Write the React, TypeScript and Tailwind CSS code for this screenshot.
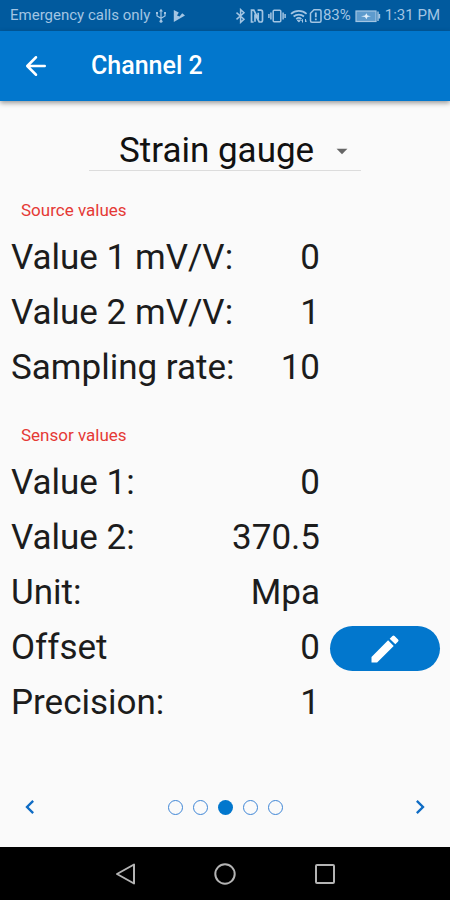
import React, { useState } from 'react';

type Reading = {
  label: string;
  value: string;
  editable?: boolean;
};

const SENSOR_TYPES = ['Strain gauge', 'Voltage', 'Current'];

const SOURCE_VALUES: Reading[] = [
  { label: 'Value 1 mV/V:', value: '0' },
  { label: 'Value 2 mV/V:', value: '1' },
  { label: 'Sampling rate:', value: '10' },
];

const SENSOR_VALUES: Reading[] = [
  { label: 'Value 1:', value: '0' },
  { label: 'Value 2:', value: '370.5' },
  { label: 'Unit:', value: 'Mpa' },
  { label: 'Offset', value: '0', editable: true },
  { label: 'Precision:', value: '1' },
];

const PAGE_COUNT = 5;

const StatusBar: React.FC = () => (
  <div className="flex h-[31px] items-center justify-between bg-[#015a9e] px-[10px] text-[15px] text-[#a3c5e3]">
    <div className="flex items-center gap-1">
      <span className="whitespace-nowrap">Emergency calls only</span>
      {/* USB */}
      <svg className="ml-[1px] h-4 w-3" viewBox="0 0 12 16" fill="none" stroke="currentColor" strokeWidth="1.2">
        <path d="M6 2v11M2 5v3l4 2.200 4-2.200V5" />
        <path d="M4 3.400L6 .8l2 2.600zM1 4h2v2H1zM9 4h2v2H9z" fill="currentColor" stroke="none" />
        <circle cx="6" cy="13.200" r="1.500" fill="currentColor" stroke="none" />
      </svg>
      {/* Play badge */}
      <svg className="ml-[2px] h-4 w-3" viewBox="0 0 12 16" fill="currentColor">
        <path d="M.8 2l5 2.400-1.800 3 2.600 1.200 2.600-3.400L12 7.400.8 14z" />
      </svg>
    </div>
    <div className="flex items-center">
      {/* Bluetooth */}
      <svg className="h-4 w-3" viewBox="0 0 12 16" fill="none" stroke="currentColor" strokeWidth="1.500">
        <path d="M1.500 4.600l7.500 6.600-3.400 3.200V1.600L9 4.800l-7.500 6.600" />
      </svg>
      {/* NFC */}
      <svg className="ml-[3px] h-4 w-[14px]" viewBox="0 0 14 16" fill="none" stroke="currentColor" strokeWidth="1.700">
        <path d="M3.600 14H1.500V2.200h2.300L8.200 11V4.800" />
        <path d="M5 13.800V6.500M7.600 2.200h3.200q1.700 0 1.700 1.700v8.400q0 1.700-1.700 1.700H9.200L5 6" />
      </svg>
      {/* Vibrate */}
      <svg className="ml-1 h-4 w-[18px]" viewBox="0 0 18 16" fill="none" stroke="currentColor" strokeWidth="1.500">
        <rect x="5.200" y="2.200" width="7.600" height="11.600" rx="1" />
        <path d="M2.900 4.500v7M15.100 4.500v7M.9 6v4M17.100 6v4" />
      </svg>
      {/* Wi-Fi */}
      <svg className="ml-1 h-4 w-[18px]" viewBox="0 0 18 16" fill="none" stroke="currentColor" strokeWidth="1.700">
        <path d="M1 5.800c4.400-4 11.200-4 15.600 0M3.600 8.500c3-2.600 7.400-2.600 10.400 0M6.200 11.100c1.600-1.400 3.600-1.400 5.200 0" />
        <path d="M7.300 12.200h3l-1.500 1.900zM12.500 14.500v-3l-1 1M15.500 11v3l1-1" fill="currentColor" strokeWidth="1" />
      </svg>
      {/* SIM alert */}
      <svg className="ml-[1px] h-4 w-[14px]" viewBox="0 0 14 16" fill="none" stroke="currentColor" strokeWidth="1.500">
        <path d="M1.500 5.200l3.500-3.400h5.500q1.500 0 1.500 1.500v9.400q0 1.500-1.500 1.500H3q-1.500 0-1.500-1.500z" />
        <path d="M6.800 4.500v4.700M6.800 10.500v1.700" strokeWidth="1.800" />
      </svg>
      <span>83%</span>
      {/* Battery, charging */}
      <svg className="ml-1 h-4 w-[26px]" viewBox="0 0 26 16" fill="none" stroke="currentColor">
        <rect x="1" y="3" width="20" height="10.500" fill="#5e9bcd" strokeWidth="1.200" />
        <path d="M23 3.500v9.500M24.500 6v4.500" strokeWidth="1.400" />
        <path d="M6 8.200l4-.8 1.500-2.200 1 2.200 3.500.8-3.500.8-1 2.200L10 9z" fill="#e3f0fb" stroke="none" />
      </svg>
      <span className="ml-1 whitespace-nowrap">1:31 PM</span>
    </div>
  </div>
);

const AppBar: React.FC = () => (
  <header className="relative flex h-[70px] items-center bg-[#0277cd] px-[21px] text-white shadow-[0_2px_5px_rgba(0,0,0,0.4)]">
    <button type="button" aria-label="Back">
      <svg className="h-[30px] w-[30px]" viewBox="0 0 24 24" fill="none" stroke="currentColor" strokeWidth="2" strokeLinecap="round" strokeLinejoin="round">
        <path d="M19 12H5.200M12 5l-7 7 7 7" />
      </svg>
    </button>
    <h1 className="ml-10 text-[25px] font-medium">Channel 2</h1>
  </header>
);

const ReadingSection: React.FC<{ title: string; readings: Reading[] }> = ({ title, readings }) => (
  <section>
    <h2 className="flex h-10 items-center px-[21px] text-[17px] text-[#e53935]">{title}</h2>
    <dl>
      {readings.map((reading) => (
        <div key={reading.label} className="flex h-[55px] items-center pr-[10px] pl-[11px] text-[35px] text-[#1c1c1c]">
          <dt className="whitespace-nowrap">{reading.label}</dt>
          <dd className="flex-1 text-right">{reading.value}</dd>
          <div className="ml-[10px] w-[110px] shrink-0">
            {reading.editable && (
              <button
                type="button"
                aria-label={`Edit ${reading.label}`}
                className="flex h-[45px] w-full items-center justify-center rounded-full bg-[#0277cd] text-white"
              >
                <svg className="h-9 w-9" viewBox="0 0 24 24" fill="currentColor">
                  <path d="M3 17.250V21h3.750L17.810 9.940l-3.750-3.750zM20.710 7.040a1 1 0 0 0 0-1.410l-2.340-2.340a1 1 0 0 0-1.410 0l-1.830 1.830 3.750 3.750z" />
                </svg>
              </button>
            )}
          </div>
        </div>
      ))}
    </dl>
  </section>
);

const Pager: React.FC<{ page: number; onChange: (page: number) => void }> = ({ page, onChange }) => (
  <nav className="flex items-center justify-between px-4 pb-[26px] text-[#0f6cc4]" aria-label="Channels">
    <button type="button" aria-label="Previous" onClick={() => onChange(Math.max(0, page - 1))}>
      <svg className="h-7 w-7" viewBox="0 0 24 24" fill="currentColor">
        <path d="M15.410 7.410L14 6l-6 6 6 6 1.410-1.410L10.830 12z" />
      </svg>
    </button>
    <div className="flex gap-[10px]">
      {Array.from({ length: PAGE_COUNT }, (_, idx) => (
        <button
          key={idx}
          type="button"
          aria-label={`Channel ${idx}`}
          onClick={() => onChange(idx)}
          className={
            idx === page
              ? 'h-[15px] w-[15px] rounded-full bg-[#0277cd]'
              : 'h-[15px] w-[15px] rounded-full border border-[#3f86d6]'
          }
        />
      ))}
    </div>
    <button type="button" aria-label="Next" onClick={() => onChange(Math.min(PAGE_COUNT - 1, page + 1))}>
      <svg className="h-7 w-7" viewBox="0 0 24 24" fill="currentColor">
        <path d="M10 6L8.590 7.410 13.170 12l-4.580 4.590L10 18l6-6z" />
      </svg>
    </button>
  </nav>
);

const SystemNav: React.FC = () => (
  <div className="flex h-[53px] items-center justify-center gap-[76px] bg-black text-[#b4b4b4]">
    <button type="button" aria-label="System back">
      <svg className="h-6 w-6" viewBox="0 0 24 24" fill="none" stroke="currentColor" strokeWidth="2" strokeLinejoin="round">
        <path d="M21 2.500v19L4 12z" />
      </svg>
    </button>
    <button type="button" aria-label="Home">
      <svg className="h-6 w-6" viewBox="0 0 24 24" fill="none" stroke="currentColor" strokeWidth="2">
        <circle cx="12" cy="12" r="9.700" />
      </svg>
    </button>
    <button type="button" aria-label="Recent apps">
      <svg className="h-6 w-6" viewBox="0 0 24 24" fill="none" stroke="currentColor" strokeWidth="2">
        <rect x="3" y="3" width="18" height="18" rx="1" />
      </svg>
    </button>
  </div>
);

const App: React.FC = () => {
  const [sensorType, setSensorType] = useState(SENSOR_TYPES[0]);
  const [page, setPage] = useState(2);

  return (
    <div className="flex min-h-screen flex-col bg-[#fafafa] font-[Roboto,sans-serif]">
      <StatusBar />
      <AppBar />
      <main className="flex flex-1 flex-col pt-[31px]">
        <div className="relative mx-auto w-[272px] border-b border-[#dcdcdc]">
          <select
            aria-label="Sensor type"
            value={sensorType}
            onChange={(e) => setSensorType(e.target.value)}
            className="h-[38px] w-full appearance-none bg-transparent pl-[30px] text-[35px] leading-[38px] text-[#111111]"
          >
            {SENSOR_TYPES.map((type) => (
              <option key={type}>{type}</option>
            ))}
          </select>
          <svg className="pointer-events-none absolute top-[6px] right-[6px] h-[26px] w-[26px] text-[#666666]" viewBox="0 0 24 24" fill="currentColor">
            <path d="M7 10l5 5 5-5z" />
          </svg>
        </div>
        <div className="flex flex-1 flex-col gap-5 pt-5">
          <ReadingSection title="Source values" readings={SOURCE_VALUES} />
          <ReadingSection title="Sensor values" readings={SENSOR_VALUES} />
        </div>
        <Pager page={page} onChange={setPage} />
      </main>
      <SystemNav />
    </div>
  );
};

export default App;
